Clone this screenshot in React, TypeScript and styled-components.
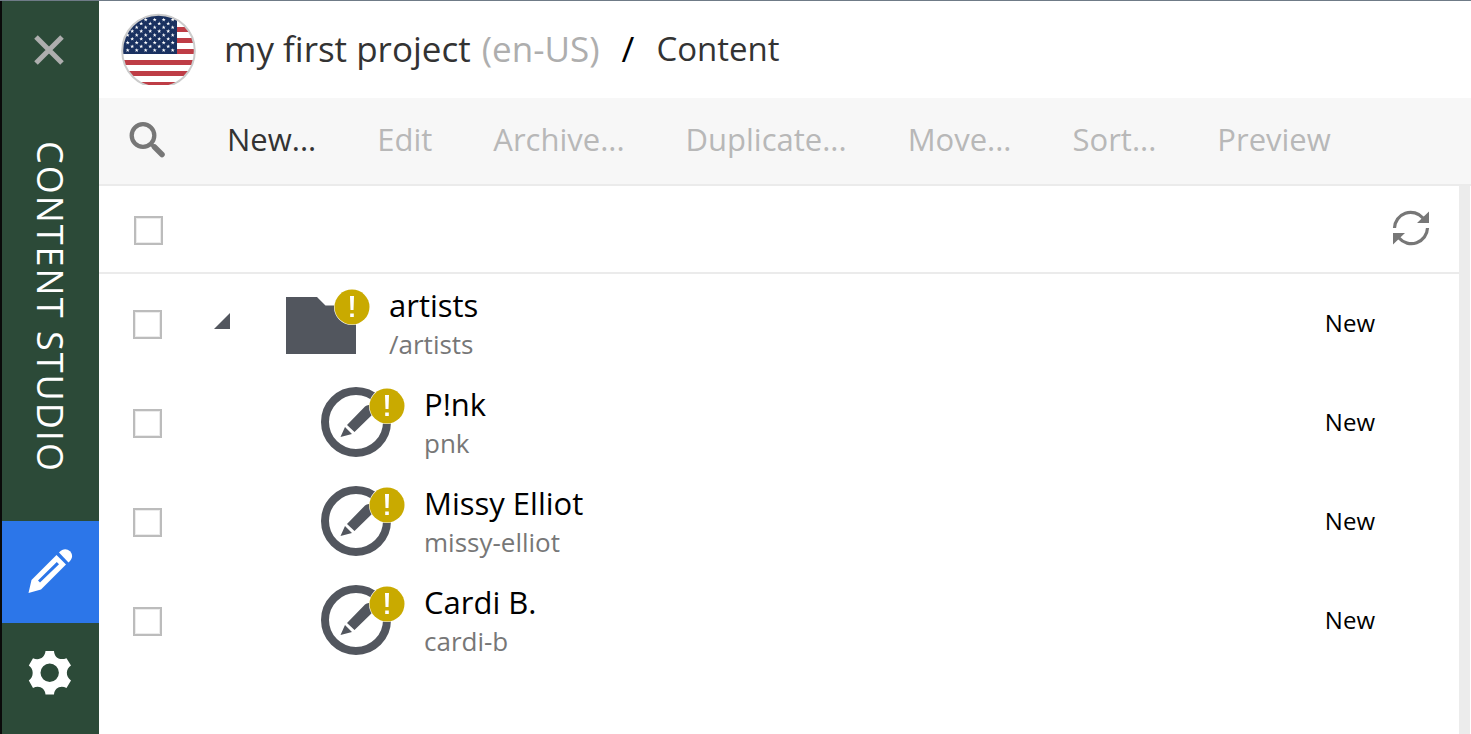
import React from 'react';
import styled, { createGlobalStyle } from 'styled-components';

const GlobalStyle = createGlobalStyle`
  *, *::before, *::after { box-sizing: border-box; }
  body {
    margin: 0;
    background: #fff;
    color: #000;
    font-family: 'Open Sans', 'Noto Sans', sans-serif;
  }
  button, input { font: inherit; margin: 0; }
`;

const Shell = styled.div`
  display: flex;
  min-height: 100vh;
  border-top: 1px solid #6f7b87;
`;

const Sidebar = styled.nav`
  display: flex;
  flex-direction: column;
  flex: 0 0 99px;
  border-left: 2px solid #0a0a0a;
  background: #2c4a38;
`;

const SidebarButton = styled.button<{ $active?: boolean }>`
  display: flex;
  align-items: center;
  justify-content: center;
  height: 102px;
  padding: 0 2px 2px 0;
  border: 0;
  background: ${({ $active }) => ($active ? '#2c76e9' : 'transparent')};
  color: #fff;
  cursor: pointer;
`;

const CloseButton = styled(SidebarButton)`
  height: 98px;
  padding: 0 4px 0 0;
  color: #aeaeae;
`;

const AppName = styled.div`
  display: flex;
  align-items: center;
  height: 422px;
  padding-top: 42px;
  line-height: 97px;
  font-size: 36px;
  letter-spacing: 2px;
  white-space: nowrap;
  color: #fff;
  writing-mode: vertical-rl;
`;

const Main = styled.main`
  display: flex;
  flex-direction: column;
  flex: 1;
  min-width: 0;
`;

const Header = styled.header`
  display: flex;
  align-items: center;
  height: 97px;
  padding-left: 21px;
`;

const Breadcrumb = styled.div`
  display: flex;
  align-items: center;
  padding: 0 0 2px 28px;
  font-size: 35px;
  line-height: 48px;
  white-space: nowrap;
`;

const Project = styled.h1`
  margin: 0;
  font-size: inherit;
  font-weight: 400;
  color: #333;
`;

const Language = styled.span`
  margin-left: 2px;
  color: #aeaeae;
`;

const Slash = styled.span`
  margin: 0 22px;
`;

const Section = styled.a`
  font-size: 33px;
  color: #333;
  text-decoration: none;
`;

const Toolbar = styled.div`
  display: flex;
  align-items: center;
  gap: 61px;
  height: 88px;
  padding: 0 0 2px 29px;
  border-bottom: 2px solid #ebebeb;
  background: #f7f7f7;
`;

const IconButton = styled.button`
  display: flex;
  padding: 0;
  border: 0;
  background: none;
  color: #777;
  cursor: pointer;
`;

const RefreshButton = styled(IconButton)`
  padding-bottom: 2px;
`;

const Action = styled.button`
  padding: 0 0 2px;
  border: 0;
  background: none;
  font-size: 31px;
  line-height: 44px;
  white-space: nowrap;
  color: #333;
  cursor: pointer;
  &:disabled { color: #b8b8b8; cursor: default; }
`;

const Panel = styled.section`
  flex: 1;
  margin-right: 1px;
  border-right: 11px solid #ececec;
`;

const TreeHeader = styled.div`
  display: flex;
  align-items: center;
  justify-content: space-between;
  height: 88px;
  padding: 0 29px 0 35px;
  border-bottom: 2px solid #ebebeb;
`;

const Checkbox = styled.input`
  && { margin-top: 2px; }
  appearance: none;
  flex: none;
  width: 29px;
  height: 29px;
  border: 2px solid #bcbcbc;
  background: #fff;
  box-shadow: inset 0 0 0 1px #ececec;
  &:checked { background: #777; }
`;

const Tree = styled.ul`
  margin: 0;
  padding: 0;
  list-style: none;
`;

const Row = styled.li`
  display: flex;
  align-items: center;
  height: 99px;
  padding: 0 84px 0 34px;
`;

const Toggle = styled.div<{ $level: number }>`
  display: flex;
  flex: none;
  width: ${({ $level }) => 124 + $level * 35}px;
  padding: 0 0 6px 52px;
`;

const Names = styled.div`
  flex: 1;
  min-width: 0;
  padding-left: 19px;
`;

const DisplayName = styled.div`
  font-size: 31px;
  line-height: 40px;
`;

const PathName = styled.div`
  font-size: 26px;
  line-height: 38px;
  color: #777;
`;

const Status = styled.span`
  padding-bottom: 2px;
  font-size: 24px;
  line-height: 32px;
`;

const starRows = [19.7, 23.5, 27.3, 31.1, 35, 38.8, 42.6, 46.4, 50.2];

const Flag = () => (
  <svg width="76" height="73" viewBox="120 13 76 73" role="img" aria-label="United States">
    <defs>
      <clipPath id="disc"><circle cx="158.5" cy="51" r="36.5" /></clipPath>
      <clipPath id="frame"><rect x="120" y="13" width="76" height="72" /></clipPath>
      <path id="star" d="M0-2 .5-.6 2-.6.8.3 1.3 1.8 0 .9-1.3 1.8-.8.3-2-.6-.5-.6Z" fill="#fff" />
    </defs>
    <g clipPath="url(#frame)">
      <g clipPath="url(#disc)">
        <rect x="120" y="13" width="76" height="76" fill="#fff" />
        {[16, 27, 38, 49, 60, 71, 82].map((y) => (
          <rect key={y} x="120" y={y} width="76" height="5" fill="#be3d46" />
        ))}
        <rect x="120" y="13" width="57" height="41" fill="#1a3160" />
        {starRows.map((y, r) =>
          [0, 1, 2, 3, 4, 5].map((c) => {
            const x = (r % 2 ? 132.2 : 127.7) + c * 9;
            return x < 175 ? <use key={`${r}-${c}`} href="#star" x={x} y={y} /> : null;
          }),
        )}
      </g>
      <circle cx="158.5" cy="51" r="36.3" fill="none" stroke="#ccc" strokeWidth="2" />
    </g>
  </svg>
);

const CloseIcon = () => (
  <svg width="32" height="32" viewBox="0 0 32 32" fill="none" stroke="currentColor" strokeWidth="5">
    <path d="M3 3 29 29M29 3 3 29" />
  </svg>
);

const SearchIcon = () => (
  <svg width="38" height="38" viewBox="0 0 38 38" fill="none" stroke="currentColor">
    <circle cx="15" cy="14.500" r="11.3" strokeWidth="4.3" />
    <path d="M26.500 26 34 33.500" strokeWidth="5.500" strokeLinecap="round" />
    <path d="M22.500 22.500 27 27" strokeWidth="3.500" />
  </svg>
);

const PencilIcon = () => (
  <svg width="46" height="46" viewBox="0 0 46 46" fill="currentColor">
    <path fillRule="evenodd" d="M29.500 7 39 16.500 14 41.500 1.500 45 4.500 32ZM29.800 14 11 32.500 13 34.600 32 16.200Z" />
    <path d="M32 4.500C36 0 40 .5 43 3.200 46 6.500 46 10.500 41.500 14.500Z" />
  </svg>
);

const GearIcon = () => (
  <svg width="44" height="46" viewBox="28 650 44 46" fill="currentColor">
    <path
      fillRule="evenodd"
      d="M45.500 651H54C54.200 656.500 58.500 661 66.500 658.200L71 665.500C65.500 669 65.500 676.500 71 680.500L66.500 688C60.500 685 54.500 688 54 694.500H45.500C45 688 39 685 33 688L28.800 680.500C34 677 34 669 28.800 665.500L33 658.200C39 661 45 657.500 45.500 651ZM49.700 663.500A9.200 9.200 0 1 0 49.700 681.900 9.200 9.200 0 1 0 49.700 663.500Z"
    />
  </svg>
);

const RefreshIcon = () => (
  <svg width="38" height="38" viewBox="0 0 38 38" fill="none" stroke="currentColor" strokeWidth="3.2">
    <path d="M2.500 19A16.200 16.200 0 0 1 31 9" />
    <path d="M35.500 19A16.200 16.200 0 0 1 7 29" />
    <path d="M37 2.500V14H25ZM1 35.500V24H13Z" fill="currentColor" stroke="none" />
  </svg>
);

const Expander = () => (
  <svg width="16" height="16" viewBox="0 0 16 16">
    <path d="M0 16 16 0V16Z" fill="#52565e" />
  </svg>
);

const Badge = () => (
  <g>
    <circle cx="66" cy="20" r="18" fill="#fff" />
    <circle cx="66" cy="20" r="17.500" fill="#c9aa00" />
    <path d="M64 9H68L67.500 23H64.500ZM64.200 26.500H67.800V30H64.200Z" fill="#fff" />
  </g>
);

const FolderIcon = () => (
  <svg width="84" height="74" viewBox="0 0 84 74">
    <path d="M0 10H31L39.500 18.500H70V67H0Z" fill="#52565e" />
    <Badge />
  </svg>
);

const ContentIcon = () => (
  <svg width="84" height="74" viewBox="0 0 84 74">
    <circle cx="35" cy="36" r="31" fill="none" stroke="#52565e" strokeWidth="8" />
    <path d="M26 39 44 20.500Q46 18.500 49 19L54 26 33.500 46ZM24 41 31 48 19.500 51Z" fill="#52565e" />
    <Badge />
  </svg>
);

const actions = ['New...', 'Edit', 'Archive...', 'Duplicate...', 'Move...', 'Sort...', 'Preview'];

const items = [
  { name: 'artists', path: '/artists', level: 0 },
  { name: 'P!nk', path: 'pnk', level: 1 },
  { name: 'Missy Elliot', path: 'missy-elliot', level: 1 },
  { name: 'Cardi B.', path: 'cardi-b', level: 1 },
];

export default function App() {
  return (
    <>
      <GlobalStyle />
      <Shell>
        <Sidebar>
          <CloseButton aria-label="Close"><CloseIcon /></CloseButton>
          <AppName>CONTENT STUDIO</AppName>
          <SidebarButton $active aria-label="Content"><PencilIcon /></SidebarButton>
          <SidebarButton aria-label="Settings"><GearIcon /></SidebarButton>
        </Sidebar>
        <Main>
          <Header>
            <Flag />
            <Breadcrumb>
              <Project>my first project <Language>(en-US)</Language></Project>
              <Slash>/</Slash>
              <Section href="#content">Content</Section>
            </Breadcrumb>
          </Header>
          <Toolbar>
            <IconButton aria-label="Search"><SearchIcon /></IconButton>
            {actions.map((label, i) => (
              <Action key={label} disabled={i > 0}>{label}</Action>
            ))}
          </Toolbar>
          <Panel>
            <TreeHeader>
              <Checkbox type="checkbox" aria-label="Select all" />
              <RefreshButton aria-label="Refresh"><RefreshIcon /></RefreshButton>
            </TreeHeader>
            <Tree>
              {items.map(({ name, path, level }) => (
                <Row key={path}>
                  <Checkbox type="checkbox" aria-label={`Select ${name}`} />
                  <Toggle $level={level}>{level === 0 && <Expander />}</Toggle>
                  {level === 0 ? <FolderIcon /> : <ContentIcon />}
                  <Names>
                    <DisplayName>{name}</DisplayName>
                    <PathName>{path}</PathName>
                  </Names>
                  <Status>New</Status>
                </Row>
              ))}
            </Tree>
          </Panel>
        </Main>
      </Shell>
    </>
  );
}
